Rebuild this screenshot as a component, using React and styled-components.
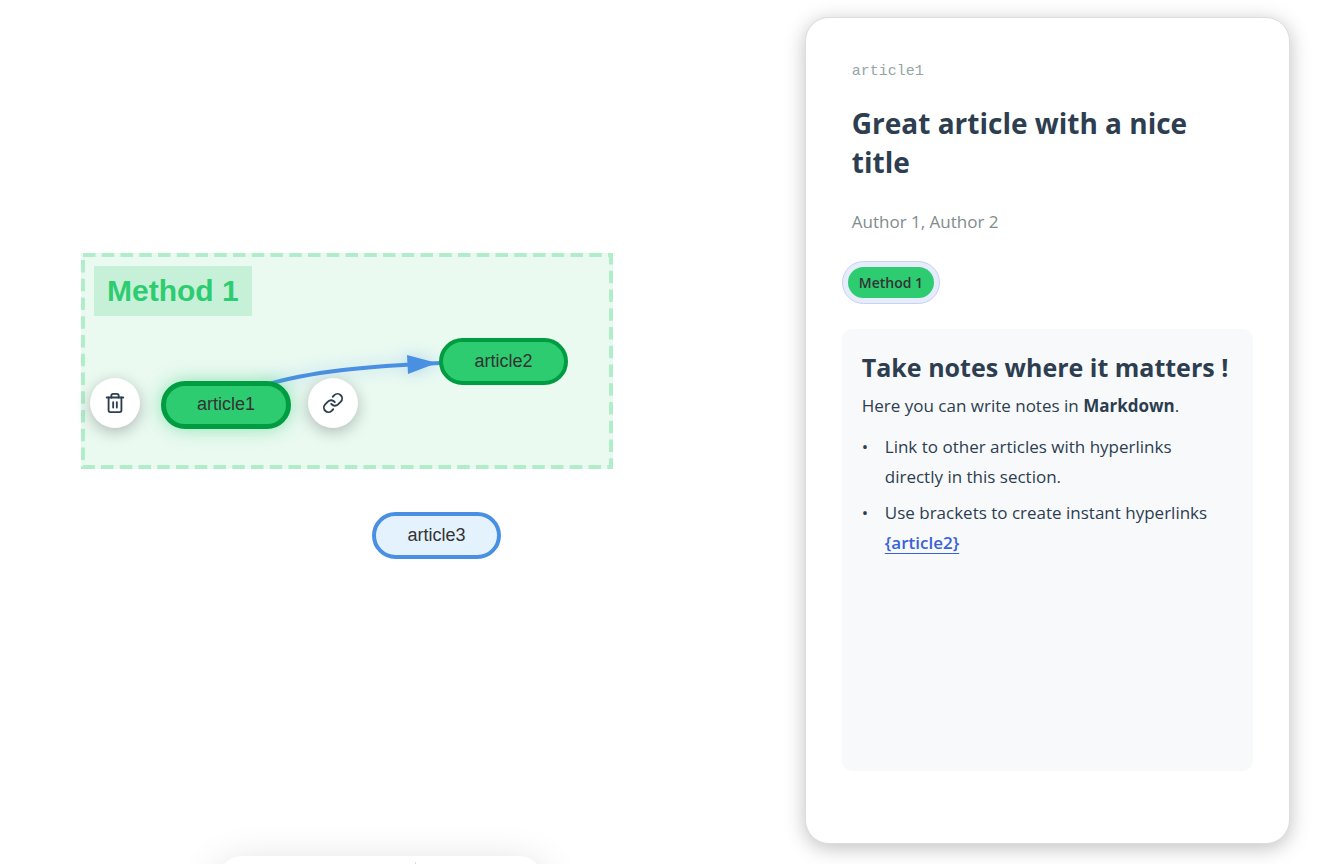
import React from 'react';

import styled, {createGlobalStyle} from 'styled-components';

import {Trash2, Link} from 'lucide-react';

const GlobalStyle = createGlobalStyle`
    * {
        box-sizing: border-box;
    }

    body {
        margin: 0;
        background-color: #fff;
        color: #2c3e50;
        font-family: 'Open Sans', 'Noto Sans', sans-serif;
    }
`;

const nodes = [
    {id: 'article1', left: 161, top: 381, tone: 'green', selected: true},
    {id: 'article2', left: 439, top: 338, tone: 'green'},
    {id: 'article3', left: 372, top: 512, tone: 'blue'},
];

const tones = {
    green: {fill: '#2ecc71', border: '#009c41'},
    blue: {fill: '#e3f2fd', border: '#4a90e2'},
};

const Edges = () => (
    <Drawing aria-hidden='true'>
        <rect x='83' y='255' width='528' height='212' fill='#2ecc71' fillOpacity='0.1' />
        <rect
            x='83' y='255' width='528' height='212'
            fill='none' stroke='#e9f9f0' strokeWidth='4'
        />
        <rect
            x='83' y='255' width='528' height='212'
            fill='none' stroke='#b1edca' strokeWidth='4' strokeDasharray='12.5 6.25'
        />
        <g className='edge'>
            <path d='M262 386 C310 371 370 366 440 363' fill='none' stroke='#4a90e2' strokeWidth='4' />
            <path d='M407 355 L437 363 L408 374 Z' fill='#4a90e2' />
        </g>
    </Drawing>
)

const GraphNode = ({id, left, top, tone, selected = false}) => (
    <Node $left={left} $top={top} $tone={tones[tone]} $selected={selected}>
        {id}
    </Node>
)

const Graph = () => (
    <Canvas>
        <Edges />
        <GroupLabel>Method 1</GroupLabel>
        {nodes.map((node) => <GraphNode key={node.id} {...node} />)}
        <RoundButton $left={90} $top={378} aria-label='Delete article'>
            <Trash2 size={22} />
        </RoundButton>
        <RoundButton $left={308} $top={378} aria-label='Link article'>
            <Link size={22} />
        </RoundButton>
        <Toolbar>
            <ToolbarDivider />
        </Toolbar>
    </Canvas>
)

const ArticlePanel = () => (
    <Panel>
        <Head>
            <Key>article1</Key>
            <Title>Great article with a nice title</Title>
            <Authors>Author 1, Author 2</Authors>
        </Head>
        <TagRing>
            <Tag>Method 1</Tag>
        </TagRing>
        <Notes>
            <h2>Take notes where it matters !</h2>
            <p>Here you can write notes in <strong>Markdown</strong>.</p>
            <ul>
                <li>Link to other articles with hyperlinks directly in this section.</li>
                <li>Use brackets to create instant hyperlinks <a href='#article2'>{'{article2}'}</a></li>
            </ul>
        </Notes>
    </Panel>
)

function App() {
    return (
        <Page>
            <GlobalStyle />
            <Graph />
            <Side>
                <ArticlePanel />
            </Side>
        </Page>
    )
}

const Page = styled.main`
    display: grid;
    grid-template-columns: minmax(0, 31fr) minmax(0, 20fr);
    min-height: 100vh;
`;

const Canvas = styled.section`
    position: relative;
    overflow: hidden;
`;

const Drawing = styled.svg`
    display: block;
    width: 100%;
    height: 100%;

    .edge {
        filter: drop-shadow(0 0 8px rgba(74, 144, 226, 0.4));
    }
`;

const GroupLabel = styled.div`
    position: absolute;
    left: 94px;
    top: 266px;
    padding: 0 13px;
    background-color: #c6f1d8;
    color: #2ecc71;
    font: bold 30px/50px 'Liberation Sans', Arial, sans-serif;
`;

const Node = styled.div`
    position: absolute;
    left: ${({$left}) => $left}px;
    top: ${({$top}) => $top}px;
    display: flex;
    align-items: center;
    justify-content: center;
    width: ${({$selected}) => $selected ? 130 : 129}px;
    height: ${({$selected}) => $selected ? 48 : 47}px;
    padding-bottom: 2px;
    border: ${({$selected}) => $selected ? 5 : 4}px solid ${({$tone}) => $tone.border};
    border-radius: 24px;
    background-color: ${({$tone}) => $tone.fill};
    box-shadow: ${({$selected}) => $selected ? '0 0 18px rgba(46, 204, 113, 0.5)' : 'none'};
    color: #333;
    font: 18px/20px 'Liberation Sans', Arial, sans-serif;
`;

const RoundButton = styled.button`
    position: absolute;
    left: ${({$left}) => $left}px;
    top: ${({$top}) => $top}px;
    display: flex;
    align-items: center;
    justify-content: center;
    width: 50px;
    height: 50px;
    padding: 0;
    border: none;
    border-radius: 50%;
    background-color: #fff;
    box-shadow: 0 4px 15px rgba(0, 0, 0, 0.25);
    color: #2c3e50;
    cursor: pointer;
`;

const Toolbar = styled.div`
    position: absolute;
    left: 218px;
    bottom: -52px;
    display: flex;
    justify-content: center;
    width: 325px;
    height: 60px;
    padding: 6px 0 6px 70px;
    border-radius: 24px;
    background-color: #fff;
    box-shadow: 0 8px 40px rgba(0, 0, 0, 0.15);
`;

const ToolbarDivider = styled.span`
    width: 1px;
    background-color: #ddd;
`;

const Side = styled.aside`
    display: flex;
    padding: 17px 34px 20px 0;
`;

const Panel = styled.article`
    display: flex;
    flex: 1;
    flex-direction: column;
    align-items: flex-start;
    min-width: 0;
    padding: 45px 36px 72px;
    border: 1px solid #ddd;
    border-radius: 24px;
    background-color: #fff;
    box-shadow: 0 4px 20px rgba(0, 0, 0, 0.25);
`;

const Head = styled.header`
    padding: 0 10px;
`;

const Key = styled.div`
    color: #95a5a6;
    font: 15px/18px 'Liberation Mono', 'Courier New', monospace;
`;

const Title = styled.h1`
    margin: 23px 0 0;
    font-size: 28px;
    font-weight: 700;
    line-height: 39px;
`;

const Authors = styled.div`
    margin-top: 28px;
    color: #7f8c8d;
    font-size: 17px;
    line-height: 24px;
`;

const TagRing = styled.div`
    margin-top: 27px;
    padding: 5px;
    border: 1px solid #c5d2f5;
    border-radius: 22px;
    background-color: #e7ecfa;
`;

const Tag = styled.div`
    padding: 0 11px;
    border-radius: 16px;
    background-color: #2ecc71;
    color: #333;
    font-size: 14px;
    font-weight: 600;
    line-height: 31px;
`;

const Notes = styled.section`
    flex: 1;
    align-self: stretch;
    margin-top: 25px;
    padding: 20px;
    border-radius: 10px;
    background-color: #f8f9fb;
    font-size: 17px;
    line-height: 30px;

    h2 {
        margin: 0;
        font-size: 25px;
        font-weight: 700;
        line-height: 36px;
    }

    p {
        margin: 6px 0 0;
    }

    ul {
        margin: 11px 0 0;
        padding: 0;
        list-style: none;
    }

    li {
        position: relative;
        padding-left: 23px;
    }

    li + li {
        margin-top: 6px;
    }

    li::before {
        content: '•';
        position: absolute;
        left: 0;
    }

    a {
        color: #3a62d8;
        font-weight: 600;
        text-underline-offset: 4px;
    }
`;

export default App;
